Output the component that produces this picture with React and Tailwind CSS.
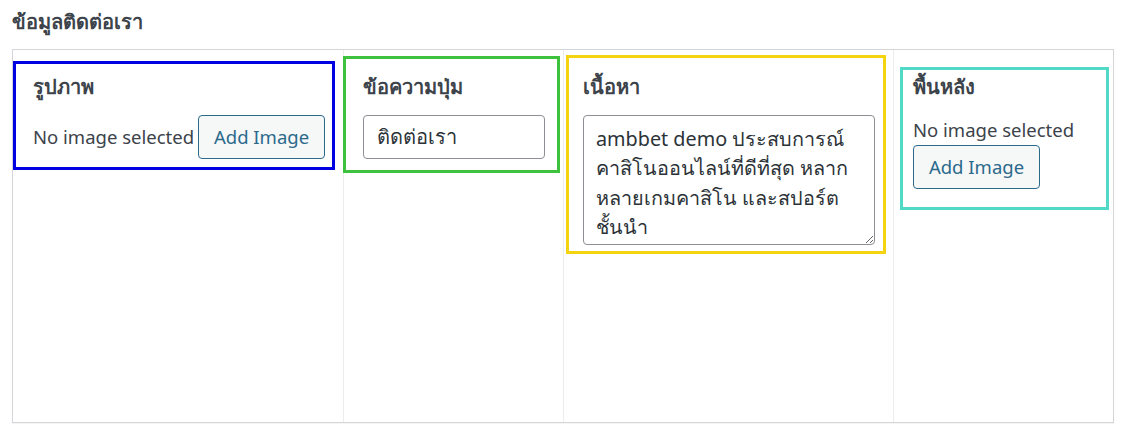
import React from "react";

const font = { fontFamily: '"Noto Sans", "Open Sans", "DejaVu Sans", sans-serif' };

function AddButton({ className = "" }) {
  return (
    <button
      type="button"
      className={`inline-flex h-[44px] w-[127px] shrink-0 items-center justify-center rounded-[4px] border border-[#2c6a8c] bg-[#f6f7f7] text-[18.5px] text-[#2c6a8c] ${className}`}
    >
      Add Image
    </button>
  );
}

export default function App() {
  return (
    <div className="h-[434px] w-[1129px] bg-white text-[#3c434a]" style={font}>
      <div className="px-[12px] pt-[8px]">
        <h2 className="h-[27px] text-[20px] font-bold leading-[27px] text-[#3c434a]">ข้อมูลติดต่อเรา</h2>
      </div>
      <div className="ml-[12px] mt-[14px] grid h-[374px] w-[1102px] grid-cols-[330px_220px_330px_220px] border border-[#d3d5d8] shadow-[0_1px_1px_rgba(0,0,0,0.04)]">
        {/* รูปภาพ */}
        <div>
          <div className="mt-[11px] mr-[8px] border-[3px] border-[#0000e0] pl-[17px] pt-[10px] pb-[8px]">
            <div className="text-[20px] font-bold leading-[26px]">รูปภาพ</div>
            <div className="mt-[15px] flex items-center gap-[4px]">
              <span className="text-[18.5px] leading-[26px]">No image selected</span>
              <AddButton />
            </div>
          </div>
        </div>
        {/* ข้อความปุ่ม */}
        <div className="border-l border-[#ececec]">
          <div className="mt-[6px] mr-[3px] ml-[-1px] border-[3px] border-[#3ec23e] pl-[17px] pt-[15px] pb-[11px]">
            <div className="text-[20px] font-bold leading-[26px]">ข้อความปุ่ม</div>
            <input
              type="text"
              defaultValue="ติดต่อเรา"
              className="mt-[15px] h-[44px] w-[182px] rounded-[4px] border border-[#8c8f94] bg-white px-[13px] text-[20px] text-[#2c3338] outline-none"
              style={font}
            />
          </div>
        </div>
        {/* เนื้อหา */}
        <div className="border-l border-[#ececec]">
          <div className="mt-[5px] mr-[7px] ml-[2px] border-[3px] border-[#f4d40e] pl-[14px] pt-[16px] pb-[6px]">
            <div className="text-[20px] font-bold leading-[26px]">เนื้อหา</div>
            <textarea
              defaultValue={"ambbet demo ประสบการณ์\nคาสิโนออนไลน์ที่ดีที่สุด หลาก\nหลายเกมคาสิโน และสปอร์ต\nชั้นนำ"}
              className="mt-[15px] block h-[130px] w-[292px] resize rounded-[4px] border border-[#8c8f94] bg-white px-[12px] pt-[8px] text-[19.8px] leading-[29.3px] text-[#2c3338] outline-none"
              style={font}
            />
          </div>
        </div>
        {/* พื้นหลัง */}
        <div className="border-l border-[#ececec]">
          <div className="mt-[17px] mr-[4px] ml-[6px] border-[3px] border-[#50d9c7] pl-[10px] pt-[4px] pb-[18px]">
            <div className="text-[20px] font-bold leading-[26px]">พื้นหลัง</div>
            <div className="mt-[17px] text-[18.5px] leading-[26px]">No image selected</div>
            <AddButton className="mt-[2px]" />
          </div>
        </div>
      </div>
    </div>
  );
}
